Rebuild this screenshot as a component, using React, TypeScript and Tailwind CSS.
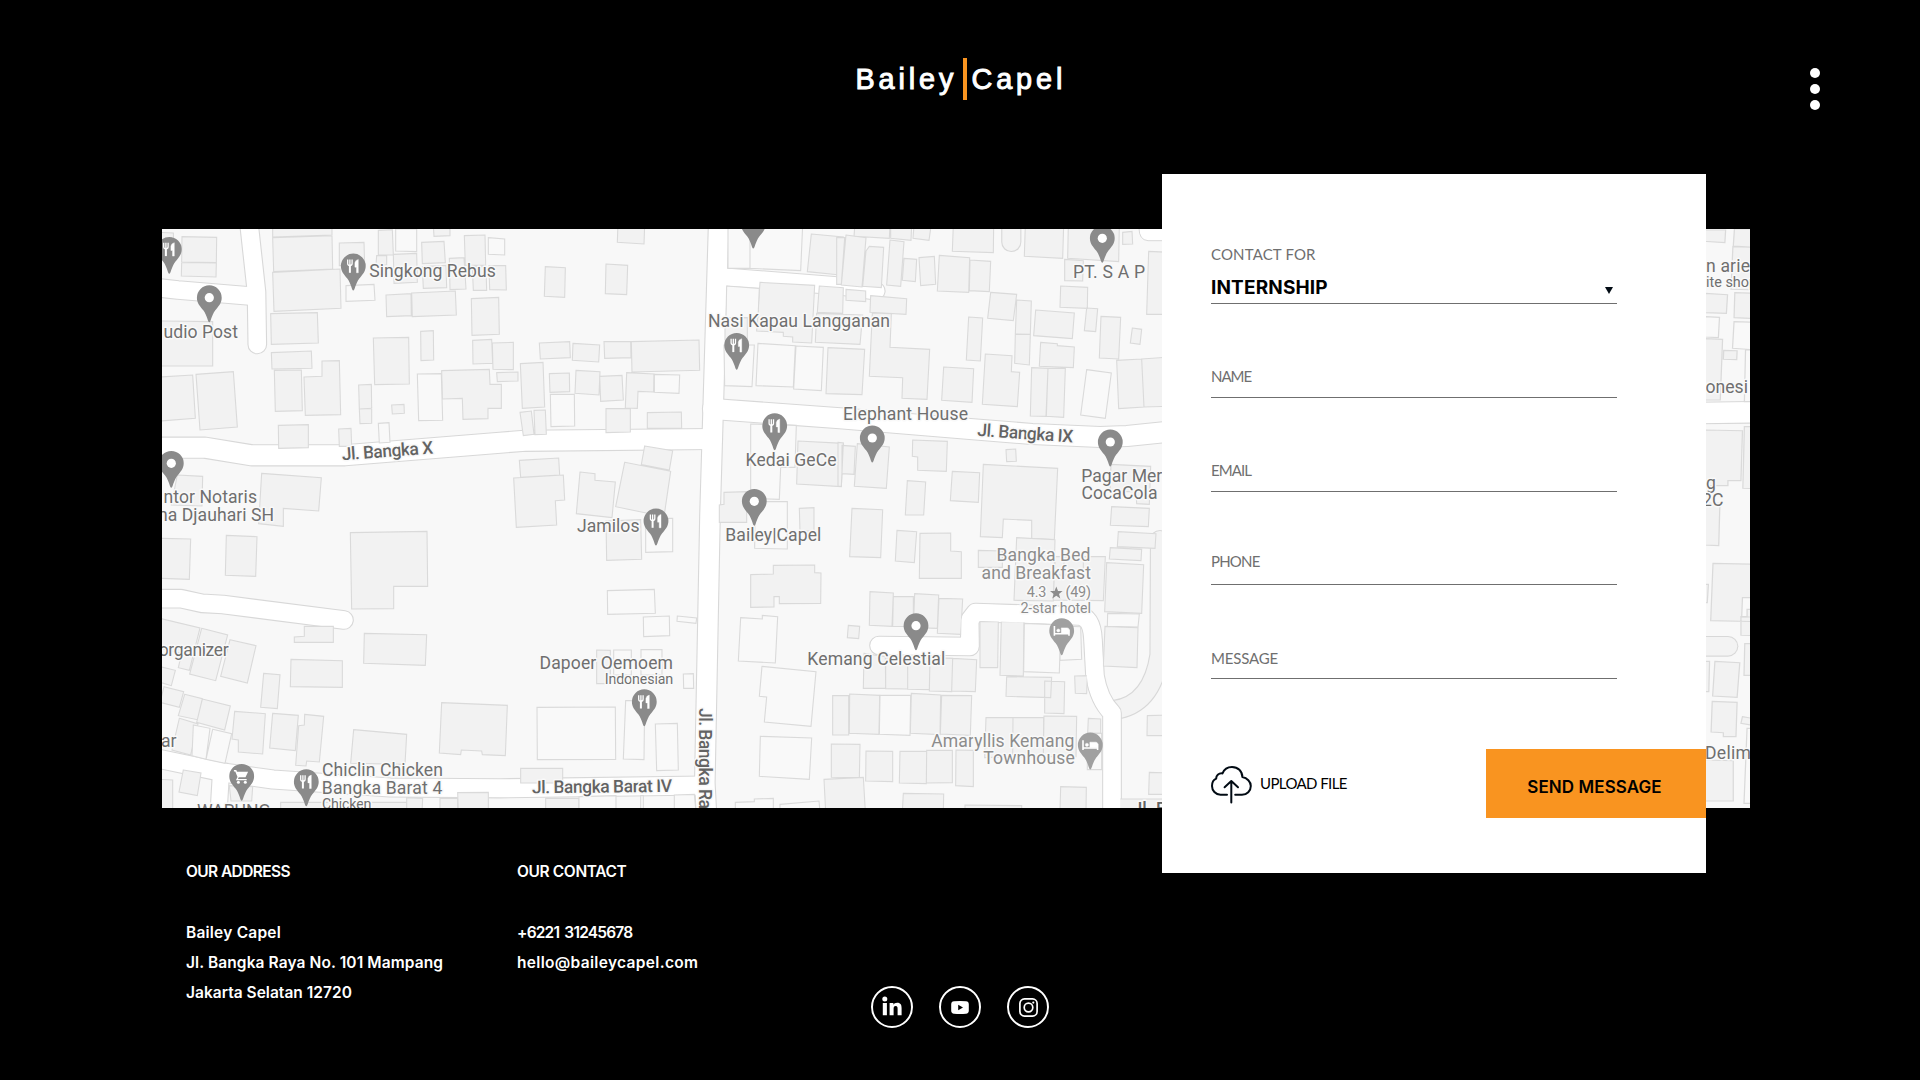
import React from "react";

type Sheet = { x: number; y: number; sx: number; solid: string; open: string };

/* Building outlines, drawn at three times map scale. Four numbers make a box, more make a polygon. */
const sheets: Sheet[] = [
  {
    x: 160, y: 225, sx: 0.33333,
    solid:
      "66,35 170,37 169,113 65,111;65,112 169,114 168,156 64,153;0,22 40,24 42,70 0,70;0,288 158,290 158,423 0,423;0,456 98,450 106,580 0,588;108,448 220,440 232,606 120,615;338,0 516,0 516,30 338,36;338,38 516,32 518,132 341,140;338,142 540,132 543,250 342,259;332,266 472,263 475,354 334,358;334,383 454,378 456,430 336,432;343,436 424,435 427,557 346,559;432,456 486,454 486,408 538,407 542,569 436,571;355,601 445,599 445,668 356,670;538,54 612,52 614,120 538,122;655,16 697,14 700,90 655,90;650,92 680,92 680,120 648,120;700,88 770,85 772,172 702,175;785,52 852,49 856,113 787,116;820,0 870,0 870,32 822,34;913,32 975,30 977,121 916,121;868,100 912,98 918,192 870,194;787,125 858,121 860,188 790,190;937,125 978,125 980,196 940,196;987,122 1037,122 1039,195 989,194;678,210 753,206 754,272 680,275;755,204 886,198 889,270 757,275;934,221 1016,217 1018,328 936,331;782,319 820,317 821,405 783,407;640,339 746,337 748,477 644,479;938,346 995,343 998,415 939,417;997,354 1060,352 1060,434 999,433;596,480 634,478 635,550 598,552;598,552 635,550 635,595 600,596;695,540 732,538 733,565 697,567;845,437 988,433 990,478 1024,478 1024,550 984,550 984,581 909,583 907,520 847,522;1010,443 1074,441 1074,468 1012,470;536,612 573,610 575,664 538,664;305,745 484,758 476,858 370,850 370,904 296,896;52,750 128,754 126,843 34,840",
    open: "707,12 770,12 770,80 707,78;985,38 1034,42 1034,90 985,88;558,182 642,178 645,226 558,229;772,447 844,446 848,586 776,587;655,595 687,593 690,652 658,654",
  },
  {
    x: 500, y: 225, sx: 0.33333,
    solid:
      "354,-5 434,0 432,57 352,52;136,125 196,128 194,217 133,214;318,117 383,121 380,209 316,206;118,354 209,350 211,398 121,402;219,355 299,360 296,411 217,406;312,350 392,350 393,398 314,400;394,350 597,345 599,436 396,441;61,416 129,412 134,546 67,550;148,446 208,444 209,500 150,502;228,436 300,440 297,510 225,505;299,454 366,451 370,525 302,529;380,443 462,447 461,501 414,499 412,550 376,549;60,562 94,558 102,628 70,632;102,556 136,555 139,628 105,629;318,551 391,550 391,621 318,623;442,563 544,561 545,610 442,610;58,706 176,699 179,750 62,757;41,759 190,750 194,825 166,827 170,900 49,907;240,741 285,746 285,766 346,771 336,878 229,866;434,663 518,677 508,735 424,719;374,712 512,739 492,875 347,845;934,27 1030,36 1020,150 922,140;780,172 944,181 935,354 878,351 878,336 850,334 850,322 770,318;958,183 1030,188 1028,265 952,262;950,265 1088,270 1080,358 946,352;675,278 742,278 742,345 675,345;984,368 1094,373 1086,509 978,506;894,648 1030,655 1024,785 890,777;672,802 740,800 740,892 658,892 658,840 672,838;898,850 942,848 942,918 900,918;318,888 422,884 425,1003 320,1006",
    open: "151,508 223,508 224,603 153,605;463,448 539,450 537,505 463,502;684,-5 750,-5 750,130 684,130;750,0 908,0 902,137 750,130;680,183 778,190 774,278 678,278;672,360 763,360 756,485 674,482;774,355 886,362 880,486 768,482;888,363 970,367 964,497 881,492;752,597 889,601 885,727 842,727 838,823 752,820;765,830 862,830 862,972 764,970;437,880 518,880 518,980 437,982",
  },
  {
    x: 840, y: 225, sx: 0.33333,
    solid:
      "45,-5 150,0 148,40 42,34;152,0 215,0 213,46 152,40;222,0 272,10 267,46 219,40;18,30 78,38 66,186 4,180;-10,38 14,38 4,178 -10,178;78,78 88,64 131,67 124,188 68,184;150,45 192,50 182,184 140,180;192,100 230,103 226,170 187,166;237,98 283,94 287,178 242,182;298,91 389,98 386,202 292,198;390,105 452,109 448,200 388,197;340,0 461,0 460,83 337,79;556,0 671,0 668,100 553,94;685,0 838,0 836,110 683,100;848,22 876,19 878,57 848,58;926,79 990,82 990,268 920,268;674,103 730,107 728,168 674,167;662,183 743,187 742,250 660,247;18,193 77,198 77,230 18,226;92,212 200,221 198,268 90,262;97,264 154,266 150,367 269,373 261,523 186,520 188,458 88,454;452,202 530,208 520,287 443,280;386,276 428,279 421,408 379,405;530,225 574,228 571,328 526,327;526,328 571,328 568,420 524,415;587,255 703,264 697,341 581,332;602,352 652,356 652,362 703,366 700,428 598,424;740,249 773,251 767,320 733,317;783,274 842,277 836,402 778,399;877,309 905,313 900,358 871,354;830,406 905,402 912,546 836,551;905,402 990,396 990,544 912,546;575,428 624,430 618,574 571,573;624,430 676,430 671,577 619,574;311,426 401,431 396,532 305,526;436,387 516,392 514,440 539,442 532,545 427,538;218,645 322,649 319,739 233,736 233,696 217,694;498,674 527,672 529,709 500,710;430,718 653,730 643,944 575,940 575,886 490,882 487,938 421,935;337,739 419,743 415,832 331,827;52,656 148,666 139,790 43,784;6,661 46,664 42,748 6,746;-6,652 10,654 4,784 -6,784;202,767 257,771 251,870 196,870;36,850 128,854 122,998 29,995;813,718 932,724 928,838 890,836 888,800 810,800;815,845 928,850 925,905 811,901",
    open: "740,434 814,444 796,580 722,570",
  },
  {
    x: 840, y: 515, sx: 0.33333,
    solid:
      "171,46 230,50 223,143 166,138;240,55 332,54 332,108 364,110 364,190 238,190;90,230 160,234 156,334 88,331;160,244 220,245 220,335 158,334;224,236 296,240 292,340 220,338;297,250 368,252 362,358 292,355;25,331 59,334 56,371 22,368;72,415 136,425 137,520 70,520;137,428 203,428 203,522 137,521;203,428 270,428 268,524 203,523;270,428 338,430 335,530 268,528;338,430 410,434 406,530 335,528;415,106 487,108 487,157 415,157;530,68 645,74 640,258 522,256;645,125 796,125 790,257 640,255;645,125 672,125 672,180 645,180;672,125 730,125 730,180 672,180;835,50 948,56 945,100 832,95;811,98 905,103 903,137 808,132;800,143 911,149 905,295 794,290;795,334 894,338 891,458 790,453;420,320 475,320 473,458 420,458;484,320 552,320 550,483 480,481;704,483 742,482 740,536 706,535;500,485 635,487 632,548 498,544;614,498 674,500 672,596 614,594;-22,542 26,542 26,660 -22,660;29,537 119,541 117,658 28,655;214,535 302,540 300,659 211,655;305,541 395,542 391,661 301,657;438,608 519,608 518,725 434,728;519,608 611,608 610,725 518,725;612,603 710,604 708,725 610,725;745,610 782,612 782,655 743,655;-26,687 60,688 58,788 -26,787;78,708 158,709 158,800 77,798;180,709 260,709 259,806 178,804;260,706 337,706 337,803 259,804;348,705 400,706 400,815 347,812;-48,793 70,787 76,890 -43,890;190,835 311,837 310,890 187,890;375,870 545,872 545,890 375,890;662,815 739,817 738,890 660,890;922,602 990,600 990,662 921,662;928,772 990,774 990,838 926,838;838,852 990,852 990,890 838,890",
    open: "803,295 898,297 894,336 802,334;553,325 662,330 658,474 551,470;662,333 722,335 725,433 660,436;120,541 212,541 210,661 118,658;742,655 785,655 785,764 742,764",
  },
  {
    x: 160, y: 515, sx: 0.33333,
    solid:
      "0,70 92,72 88,193 0,190;199,61 291,65 287,184 196,181;571,53 801,49 803,214 701,214 701,281 575,282;613,355 800,359 796,451 611,445;433,334 520,334 520,382 403,382 403,366 433,364;393,433 547,437 547,517 391,515;311,475 360,479 352,581 302,577;0,310 120,339 88,466 55,458 65,415 0,400;125,340 203,360 167,497 89,477;210,374 288,392 262,504 182,484;0,455 46,466 34,512 0,502;12,515 71,530 58,577 0,562;74,538 127,551 112,614 55,602;127,552 211,573 194,645 110,622;58,610 114,627 92,720 36,705;224,589 316,596 308,717 235,711 235,675 216,672;338,595 415,601 406,707 329,699;434,598 491,604 478,741 440,738 438,753 407,751 416,632 433,630;581,644 740,658 735,748 572,745;845,563 1042,571 1036,722 967,719 965,708 904,705 902,719 838,714;70,765 123,774 112,842 57,831;0,793 38,795 38,890 0,890;208,812 278,815 275,858 213,858;362,862 740,862 740,890 362,890;893,833 985,832 985,890 895,890;740,848 788,850 786,890 740,890;840,850 893,850 893,890 840,890",
    open: "158,643 215,656 195,745 138,733;100,630 150,640 138,733 96,722",
  },
  {
    x: 500, y: 515, sx: 0.33333,
    solid:
      "290,405 331,406 331,506 290,506;62,760 188,760 188,804 62,804;137,850 237,850 237,890 137,890;752,179 820,177 820,151 944,150 944,173 963,174 962,265 838,266 838,245 822,245 822,276 752,277",
    open: "322,227 463,223 466,295 323,298;430,306 508,303 509,362 431,365;532,303 590,309 588,325 531,319;341,405 394,405 394,480 341,480;423,404 486,404 486,480 423,480;550,477 580,476 581,520 551,520;111,577 346,576 347,733 112,734;377,557 434,557 432,734 370,732;466,627 532,625 535,765 470,767;237,845 348,842 348,890 237,890;422,842 430,842 430,890 422,890;523,840 583,838 588,890 523,890;722,308 787,312 787,301 833,305 826,444 715,438;786,454 948,470 933,634 793,621 800,546 778,544;781,664 935,669 928,793 778,784;706,862 763,860 763,852 820,850 820,890 706,890;840,868 957,858 960,890 840,890",
  },
  {
    x: 1160, y: 170, sx: 0.3827,
    solid:
      "1420,180 1478,180 1476,218 1420,214;1501,177 1560,177 1560,232 1498,228;1497,230 1560,232 1560,360 1492,358;1425,370 1483,374 1480,430 1425,428;1502,368 1560,370 1560,446 1500,443;1425,506 1470,508 1464,690 1425,690;1473,541 1508,542 1507,569 1472,568;1425,780 1522,782 1518,932 1484,932 1484,947 1425,947;1527,770 1560,770 1560,956 1523,955;1420,1000 1463,1000 1460,1127 1420,1125;1445,1180 1560,1183 1560,1355 1439,1352;1518,1340 1560,1342 1560,1397 1518,1396;1400,1243 1433,1243 1430,1298 1400,1298;1528,1421 1560,1421 1560,1516 1526,1516;1400,1474 1436,1474 1434,1565 1400,1565;1450,1474 1515,1478 1508,1582 1444,1578;1443,1594 1508,1597 1505,1700 1472,1700 1472,1688 1440,1686;1522,1640 1560,1648 1560,1668 1518,1660;1425,1770 1498,1772 1498,1893 1425,1893",
    open: "1425,440 1462,442 1459,503 1425,501;1500,455 1560,457 1560,540 1496,535;1530,540 1560,540 1560,695 1527,695;1522,1283 1560,1283 1560,1318 1534,1318 1534,1340 1520,1340;1534,1675 1560,1675 1560,1900 1526,1900",
  },
];

const toPath = (s: string) => s.split(";").map((p) => "M" + p.trim().split(" ").join("L") + "Z").join("");

/* Road centre lines with their widths. */
const roads: [string, number][] = [
  ["M150 447.7H205L251.7 455.3H345L500 442.7L525 440.8L712 439", 20],
  ["M718.8 220L713 414L710 515L704.8 783L706.5 815", 19.5],
  ["M713 409L840 418.3L970 429L1032 434L1100 437L1127 436L1166 432", 20],
  ["M718 276L725 277L840 286L876 291", 17],
  ["M155 287.5L178 290L250 296", 17.5],
  ["M248.6 220L256.5 292L257.3 344.5", 17.5],
  ["M155 598.7H181L202 603.3L223 604.5L344 620", 17.5],
  ["M155 758L226.7 773L273 779.5L390 787.5L500 788.3L704 785.5", 18],
  ["M221 772L218 822", 16],
  ["M879 645.5L970 646.5Q970 646.5 969.7 620L975.5 612.5L1080 616Q1092 618 1093 640L1095 676Q1099 700 1112 713V815", 17.5],
  ["M1700 413L1755 412.3", 20.5],
];

const greyRoads: [string, number][] = [
  ["M1160 540L1159.5 655Q1152 705 1114 710", 18],
  ["M1011.3 220V242", 18],
  ["M1700 646.3H1728", 18.5],
];

const pins: [number, number, "food" | "dot" | "cart" | "bed"][] = [
  [169.3, 249.3, "food"], [353.3, 266, "food"], [209.3, 297.7, "dot"], [171.3, 463.3, "dot"],
  [753.3, 224, "dot"], [736.7, 345.3, "food"], [774.7, 425.7, "food"], [754.3, 501.3, "dot"],
  [656, 521, "food"], [1102.3, 238.3, "dot"], [872.3, 438, "dot"], [1110.3, 442, "dot"],
  [241.7, 776.3, "cart"], [306.3, 781.7, "food"], [644.3, 701.7, "food"], [916, 625.7, "dot"],
  [1061.7, 630.7, "bed"], [1090.3, 745, "bed"],
];

function Pin({ x, y, kind }: { x: number; y: number; kind: string }) {
  return (
    <g transform={`translate(${x} ${y})`}>
      <path
        d="M0 24.5C-1.5 24.5-2 18-6 12.5C-9 8.8-12.4 5.5-12.4 0A12.4 12.4 0 1 1 12.4 0C12.4 5.5 9 8.8 6 12.5C2 18 1.5 24.5 0 24.5Z"
        fill={kind === "bed" ? "#a0a0a0" : "#8a8a8a"}
      />
      {kind === "dot" && <circle r="4.6" fill="#fff" />}
      {kind === "food" && (
        <g fill="none" stroke="#fff">
          <path d="M-5.6-6.5V-2.5Q-5.6-.5-3.4-.5Q-1.2-.5-1.2-2.5V-6.5M-3.4-6.5V-1" strokeWidth="1.3" />
          <path d="M-3.4-1V6.8" strokeWidth="2" />
          <path d="M5-6.6V6.8H3.2V1.2H1.6V-3.2Q2-6 5-6.6Z" fill="#fff" strokeWidth="0.4" />
        </g>
      )}
      {kind === "cart" && (
        <g fill="#fff">
          <path d="M-7.8-6.2H-5.4L-4.7-4.6H6.4L3.8 1H-2.9L-3.8 2.6H5V4H-5.8L-4.2.8L-6.4-4.8H-7.8Z" />
          <circle cx="-3.3" cy="6" r="1.5" />
          <circle cx="3.6" cy="6" r="1.5" />
        </g>
      )}
      {kind === "bed" && (
        <g fill="none" stroke="#fff">
          <path d="M-7.3-4.8V5M-7.3 3H7.3M7.3 5V-1.2" strokeWidth="1.6" />
          <path d="M-.4-2.8H5.5Q7.3-2.8 7.3-1V2.6H-.4Z" fill="#fff" strokeWidth="0.5" />
          <circle cx="-3.4" cy="-.2" r="1.6" fill="#fff" strokeWidth="0.4" />
        </g>
      )}
    </g>
  );
}

type Label = {
  t: string; x: number; y: number; w?: number; end?: boolean; s?: number;
  road?: boolean; rot?: number; light?: boolean;
};

const labels: Label[] = [
  { t: "Singkong Rebus", x: 369.3, y: 276.7, w: 126.5 },
  { t: "udio Post", x: 238, y: 338, end: true, w: 74.5 },
  { t: "Jl. Bangka X", x: 342.3, y: 460.3, w: 91.5, rot: -4.3, road: true },
  { t: "ntor Notaris", x: 257, y: 503.3, end: true, w: 93.5 },
  { t: "na Djauhari SH", x: 274, y: 521, end: true, w: 116 },
  { t: "Nasi Kapau Langganan", x: 708, y: 327, w: 182 },
  { t: "Kedai GeCe", x: 745.5, y: 465.7, w: 91 },
  { t: "Elephant House", x: 843, y: 419.7, w: 125 },
  { t: "Jl. Bangka IX", x: 977, y: 435.8, w: 96, rot: 4, road: true },
  { t: "PT. S A P", x: 1073, y: 277.7, w: 72 },
  { t: "Pagar Mer", x: 1081.3, y: 481.7, w: 81 },
  { t: "CocaCola", x: 1081.5, y: 499.3, w: 76 },
  { t: "Jamilos", x: 577, y: 531.7, w: 62.5 },
  { t: "Bailey|Capel", x: 725.3, y: 540.7, w: 96 },
  { t: "Dapoer Oemoem", x: 539.5, y: 668.7, w: 133.5 },
  { t: "Indonesian", x: 604.8, y: 684, w: 68.5, s: 14.4 },
  { t: "Jl. Bangka Ra", x: 699, y: 708, rot: 90, road: true, w: 101 },
  { t: "Jl. Bangka Barat IV", x: 532, y: 793.3, w: 140, rot: -0.6, road: true },
  { t: "organizer", x: 228.7, y: 656.3, end: true, w: 70 },
  { t: "ar", x: 176.5, y: 746.7, end: true },
  { t: "Chiclin Chicken", x: 322, y: 775.7, w: 121 },
  { t: "Bangka Barat 4", x: 321.8, y: 793.5, w: 120.5 },
  { t: "Chicken", x: 322, y: 809.3, w: 49.5, s: 14.4 },
  { t: "WARUNG", x: 197, y: 817, w: 73.5 },
  { t: "Kemang Celestial", x: 807.3, y: 665, w: 138 },
  { t: "Bangka Bed", x: 996.5, y: 560.7, w: 94, light: true },
  { t: "and Breakfast", x: 981.5, y: 579, w: 109.5, light: true },
  { t: "4.3", x: 1026.8, y: 597.3, w: 19.5, s: 14.4, light: true },
  { t: "(49)", x: 1065.5, y: 597.3, w: 25.5, s: 14.4, light: true },
  { t: "2-star hotel", x: 1020.5, y: 613.3, w: 70.5, s: 14.4, light: true },
  { t: "Amaryllis Kemang", x: 931.3, y: 746.5, w: 143, light: true },
  { t: "Townhouse", x: 983.3, y: 763.8, w: 91.5, light: true },
  { t: "Jl. B", x: 1132.5, y: 815, road: true },
  { t: "n arie", x: 1706, y: 271.7, w: 44 },
  { t: "ite shop", x: 1706, y: 287.3, s: 14.4 },
  { t: "onesi", x: 1705.5, y: 393.3 },
  { t: "g", x: 1706, y: 489 },
  { t: "2C", x: 1702, y: 505.7 },
  { t: "Delim", x: 1705, y: 759.3, w: 46 },
];

function MapArt() {
  return (
    <svg viewBox="162 229 1588 579" className="block h-full w-full">
      <rect x="162" y="229" width="1588" height="579" fill="#f8f8f8" />
      <g fill="none" strokeLinecap="round" strokeLinejoin="round">
        {greyRoads.map(([d, w]) => <path key={d} d={d} stroke="#d8d8d8" strokeWidth={w + 2.2} />)}
        {greyRoads.map(([d, w]) => <path key={d + "f"} d={d} stroke="#f3f3f3" strokeWidth={w} />)}
        {roads.map(([d, w]) => <path key={d} d={d} stroke="#d8d8d8" strokeWidth={w + 2.2} />)}
        {roads.map(([d, w]) => <path key={d + "f"} d={d} stroke="#fff" strokeWidth={w} />)}
      </g>
      <path d="M1139 228Q1139 240 1148 240.7H1170V228Z" fill="#fff" stroke="#d8d8d8" />
      {sheets.map((s) => (
        <g key={`${s.x}-${s.y}`} transform={`translate(${s.x} ${s.y}) scale(${s.sx} .33333)`} stroke="#dadada" strokeWidth="3.3">
          <path d={toPath(s.solid)} fill="#f2f2f2" />
          <path d={toPath(s.open)} fill="#f9f9f9" />
        </g>
      ))}
      <path d="M879 645.5L970 646.5Q970 646.5 969.7 620L975.5 612.5L1080 616Q1092 618 1093 640L1095 676Q1099 700 1112 713V815" fill="none" stroke="#fff" strokeWidth="16.5" strokeLinecap="round" strokeLinejoin="round" />
      {pins.map(([x, y, k]) => <Pin key={`${x}-${y}`} x={x} y={y} kind={k} />)}
      <g fontFamily="Roboto, sans-serif" stroke="#f9f9f9" strokeWidth="3" strokeLinejoin="round" paintOrder="stroke">
        {labels.map((l) => (
          <text
            key={l.t + l.x}
            transform={`translate(${l.x} ${l.y}) rotate(${l.rot ?? 0})`}
            fontSize={l.s ?? 17.6}
            fontWeight={l.road ? 500 : 400}
            fill={l.light ? "#8c8c8c" : l.road ? "#636363" : "#6f6f6f"}
            textAnchor={l.end ? "end" : "start"}
            textLength={l.w}
          >
            {l.t}
          </text>
        ))}
      </g>
      <path d="M1056.3 586.6L1058 591H1062.6L1059 593.9L1060.3 598.6L1056.3 595.8L1052.3 598.6L1053.6 593.9L1050 591H1054.6Z" fill="#8c8c8c" />
    </svg>
  );
}

const labelText = "font-['Lato',sans-serif] text-[15px] leading-5 text-[#6f6f6f]";
const rule = "flex flex-col justify-end border-b border-[#6f6f6f]";

function ContactForm() {
  return (
    <form className="absolute left-[1000px] top-[-55px] flex h-[699px] w-[544px] flex-col bg-white pl-[49px]">
      <div className={`${rule} h-[130px] w-[406px] pb-[3px]`}>
        <span className={`${labelText} tracking-[0.15px]`}>CONTACT FOR</span>
        <div className="mt-3 flex items-center justify-between pr-1">
          <span className="font-['Inter',sans-serif] text-[19px] font-bold leading-6 tracking-[0.15px] text-black">INTERNSHIP</span>
          <svg viewBox="0 0 8 7" className="mt-1 h-[7px] w-2"><path d="M0 0H8L4 7Z" fill="#020b14" /></svg>
        </div>
      </div>
      <div className={`${rule} h-[94px] w-[406px] pb-[11px]`}>
        <span className={`${labelText} tracking-[-1px]`}>NAME</span>
      </div>
      <div className={`${rule} h-[94px] w-[406px] pb-[11px]`}>
        <span className={`${labelText} tracking-[-0.95px]`}>EMAIL</span>
      </div>
      <div className={`${rule} h-[93px] w-[406px] pb-[13px]`}>
        <span className={`${labelText} tracking-[-0.8px]`}>PHONE</span>
      </div>
      <div className={`${rule} h-[94px] w-[406px] pb-[10px]`}>
        <span className={`${labelText} tracking-[-0.15px]`}>MESSAGE</span>
      </div>
      <div className="mt-[70px] flex h-[69px] items-center justify-between">
        <div className="flex items-center gap-2">
          <svg viewBox="0 0 41 38" className="mt-[3px] h-[38px] w-[41px]" fill="none" stroke="#020b14" strokeWidth="2" strokeLinecap="round" strokeLinejoin="round">
            <path d="M16 28.7H9.5C4.5 28.7 1 24.5 1 20C1 16.5 3 13.5 5.2 12.6C5 9.5 7.5 7 11.5 7.4C13 3.5 16.5 1 21 1C27 1 31.2 5.2 31.4 11C36 12 39.8 15.5 39.8 20C39.8 25 36 28.7 31 28.7H24.2" />
            <path d="M20.3 36.5V15M13.6 21.2L20.3 15L27 21.2" />
          </svg>
          <span className="mb-0.5 font-['Lato',sans-serif] text-[15px] leading-5 tracking-[-0.6px] text-black">UPLOAD FILE</span>
        </div>
        <button type="button" className="h-[69px] w-[220px] bg-[#f99420] pr-[3px] pt-[6px] font-['Inter',sans-serif] text-[17px] font-semibold leading-6 tracking-[0.08px] text-black">
          SEND MESSAGE
        </button>
      </div>
    </form>
  );
}

function Social({ children }: { children: React.ReactNode }) {
  return (
    <a className="flex h-[42px] w-[42px] items-center justify-center rounded-full border-2 border-white">{children}</a>
  );
}

export default function App() {
  return (
    <div className="flex h-[1080px] w-[1920px] flex-col overflow-hidden bg-black text-white">
      <header className="flex h-[229px] items-start pl-[855.5px] pr-[100px] pt-[58px]">
        <div className="flex font-['Liberation_Sans',sans-serif] text-[28.8px] leading-[42px] tracking-[3.9px] [-webkit-text-stroke:1px_white]">
          <span className="w-[107px]">Bailey</span>
          <span className="mr-[5px] h-[42px] w-[4px] bg-[#f99420]" />
          <span>Capel</span>
        </div>
        <div className="ml-auto mt-[10px] flex flex-col gap-[6px]">
          <span className="size-[10px] rounded-full bg-white" />
          <span className="size-[10px] rounded-full bg-white" />
          <span className="size-[10px] rounded-full bg-white" />
        </div>
      </header>

      <section className="relative ml-[162px] h-[579px] w-[1588px]">
        <MapArt />
        <ContactForm />
      </section>

      <footer className="pl-[186px] pt-[49px] font-['Inter',sans-serif] text-[15.5px] font-semibold leading-[30px]">
        <div className="flex h-[129px]">
          <div className="w-[331px]">
            <h2 className="mb-[31px] tracking-[-0.6px]">OUR ADDRESS</h2>
            <p className="tracking-[0.22px]">Bailey Capel</p>
            <p className="tracking-[0.1px]">Jl. Bangka Raya No. 101 Mampang</p>
            <p className="tracking-[0.02px]">Jakarta Selatan 12720</p>
          </div>
          <div>
            <h2 className="mb-[31px] tracking-[-0.38px]">OUR CONTACT</h2>
            <p className="tracking-[-0.8px] [word-spacing:2px]">+6221 31245678</p>
            <p className="tracking-[0.32px]">hello@baileycapel.com</p>
          </div>
        </div>
        <div className="ml-[685px] flex gap-[26px]">
          <Social>
            <svg viewBox="0 0 20 20" className="mb-0.5 h-5 w-5" fill="#fff">
              <circle cx="2.8" cy="3" r="2.5" />
              <path d="M.8 7H4.9V19.2H.8ZM7.6 7H11.4V8.7C12 7.6 13.3 6.7 15.2 6.7C18.8 6.7 19.6 9 19.6 12.2V19.2H15.6V13C15.6 11.4 15.5 10 13.7 10C12 10 11.6 11.3 11.6 12.9V19.2H7.6Z" />
            </svg>
          </Social>
          <Social>
            <svg viewBox="0 0 18 13" className="h-[13px] w-[18px]">
              <path d="M3 .3Q9-.2 15 .3Q17.7.5 17.8 3.2V9.8Q17.7 12.5 15 12.7Q9 13.2 3 12.7Q.3 12.5.2 9.8V3.2Q.3.5 3 .3Z" fill="#fff" />
              <path d="M7.2 3.8L12 6.5L7.2 9.2Z" fill="#000" />
            </svg>
          </Social>
          <Social>
            <svg viewBox="0 0 19 19" className="h-[19px] w-[19px]" fill="none" stroke="#fff" strokeWidth="1.7">
              <rect x=".9" y=".9" width="17.2" height="17.2" rx="4.6" />
              <circle cx="9.5" cy="9.5" r="4.3" />
              <circle cx="14.3" cy="4.6" r="1.1" fill="#fff" stroke="none" />
            </svg>
          </Social>
        </div>
      </footer>
    </div>
  );
}
